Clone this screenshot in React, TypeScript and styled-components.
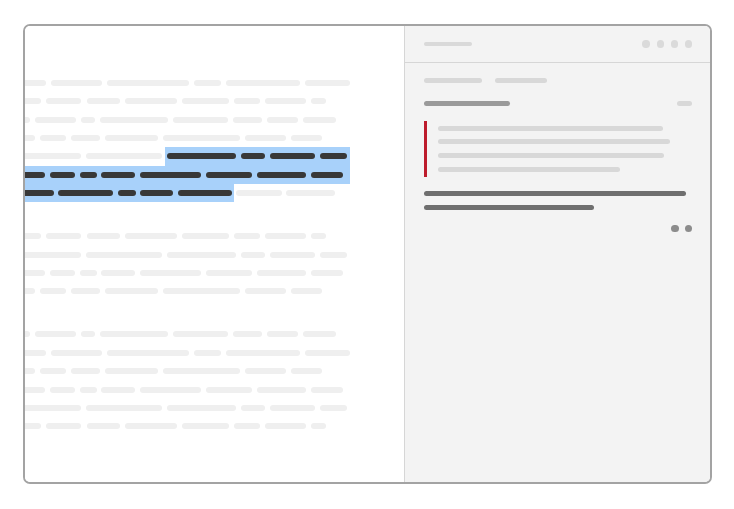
import React from "react";
import styled, { createGlobalStyle } from "styled-components";

const Global = createGlobalStyle`
  html, body { margin: 0; padding: 0; background: #ffffff; }
  body { font-family: "Liberation Sans", Arial, sans-serif; }
`;

const Stage = styled.div`
  padding: 24px 0 0 23px;
`;

const Window = styled.div`
  box-sizing: border-box;
  width: 689px;
  height: 460px;
  border: 2px solid #a3a3a3;
  border-radius: 7px;
  overflow: hidden;
  display: flex;
  background: #ffffff;
`;

const Editor = styled.div`
  width: 379px;
  flex: none;
  overflow: hidden;
  background: #ffffff;
  padding-top: 47.5px;
  box-sizing: border-box;
`;

const Column = styled.div`
  margin-left: -10px;
  display: flex;
  flex-direction: column;
  gap: 24.5px;
`;

const Paragraph = styled.div`
  display: flex;
  flex-direction: column;
`;

const Line = styled.div`
  height: 18.43px;
  display: flex;
  align-items: center;
  white-space: nowrap;
`;

const Word = styled.span<{ $dark?: boolean }>`
  flex: none;
  height: 6px;
  border-radius: 3px;
  background: ${(p) => (p.$dark ? "#383838" : "#efefef")};
`;

const Selection = styled.span`
  flex: none;
  height: 100%;
  display: flex;
  align-items: center;
  background: #a8d1fa;
`;

const Sidebar = styled.div`
  flex: 1;
  background: #f3f3f3;
  border-left: 1px solid #d6d6d6;
  display: flex;
  flex-direction: column;
`;

const Header = styled.div`
  height: 36px;
  border-bottom: 1px solid #d6d6d6;
  display: flex;
  align-items: center;
  justify-content: space-between;
  padding: 0 18px 0 19px;
`;

const Bar = styled.span<{ $w: number; $h?: number; $c?: string }>`
  display: block;
  flex: none;
  width: ${(p) => p.$w}px;
  height: ${(p) => p.$h ?? 5}px;
  border-radius: 3px;
  background: ${(p) => p.$c ?? "#d8d8d8"};
`;

const Dots = styled.div<{ $gap: number }>`
  display: flex;
  gap: ${(p) => p.$gap}px;
`;

const Dot = styled.span<{ $c: string; $d: number }>`
  width: ${(p) => p.$d}px;
  height: ${(p) => p.$d}px;
  border-radius: 50%;
  background: ${(p) => p.$c};
`;

const Body = styled.div`
  padding: 15px 18px 0 19px;
  display: flex;
  flex-direction: column;
`;

const Row = styled.div<{ $mt?: number; $between?: boolean; $gap?: number }>`
  display: flex;
  align-items: center;
  margin-top: ${(p) => p.$mt ?? 0}px;
  justify-content: ${(p) => (p.$between ? "space-between" : "flex-start")};
  gap: ${(p) => p.$gap ?? 0}px;
`;

const Quote = styled.div`
  margin-top: 15.5px;
  border-left: 3px solid #bd1b2c;
  padding: 4.5px 0 5px 11px;
  display: flex;
  flex-direction: column;
  gap: 8.7px;
`;

const Summary = styled.div`
  margin-top: 14.5px;
  display: flex;
  flex-direction: column;
  gap: 8.7px;
`;

const Actions = styled.div`
  margin-top: 15px;
  display: flex;
  justify-content: flex-end;
`;

type Pill = [number, number];
type Sel = { from: number; to: number };

const ORIGIN = 15;

const P1: Pill[] = [[15, 46], [51, 102], [107, 189], [194, 221], [226, 300], [305, 350]];
const P2: Pill[] = [[15, 41], [46, 81], [87, 120], [125, 177], [182, 229], [234, 260], [265, 306], [311, 326]];
const P3: Pill[] = [[15, 30], [35, 76], [81, 95], [100, 168], [173, 228], [233, 262], [267, 298], [303, 336]];
const P4: Pill[] = [[15, 35], [40, 66], [71, 100], [105, 158], [163, 240], [245, 286], [291, 322]];
const P5: Pill[] = [[15, 81], [86, 162], [167, 236], [241, 265], [270, 315], [320, 347]];
const P6: Pill[] = [[15, 45], [50, 75], [80, 97], [101, 135], [140, 201], [206, 252], [257, 306], [311, 343]];
const P7: Pill[] = [[15, 54], [58, 113], [118, 136], [140, 173], [178, 232], [236, 282], [286, 335]];

type LineDef = { pills: Pill[]; sel?: Sel };

const paragraphs: LineDef[][] = [
  [
    { pills: P1 },
    { pills: P2 },
    { pills: P3 },
    { pills: P4 },
    { pills: P5, sel: { from: 165, to: 350 } },
    { pills: P6, sel: { from: 15, to: 350 } },
    { pills: P7, sel: { from: 15, to: 234 } },
  ],
  [{ pills: P2 }, { pills: P5 }, { pills: P6 }, { pills: P4 }],
  [{ pills: P3 }, { pills: P1 }, { pills: P4 }, { pills: P6 }, { pills: P5 }, { pills: P2 }],
];

function renderPills(pills: Pill[], start: number, dark: boolean, keyBase: string) {
  let prev = start;
  return pills.map(([a, b], i) => {
    const el = (
      <Word
        key={keyBase + i}
        $dark={dark}
        style={{ width: b - a, marginLeft: a - prev }}
      />
    );
    prev = b;
    return el;
  });
}

function TextLine({ pills, sel }: LineDef) {
  if (!sel) {
    return <Line>{renderPills(pills, ORIGIN, false, "w")}</Line>;
  }
  const before = pills.filter(([a]) => a < sel.from);
  const inside = pills.filter(([a, b]) => a >= sel.from && b <= sel.to);
  const after = pills.filter(([, b]) => b > sel.to);
  const beforeEnd = before.length ? before[before.length - 1][1] : ORIGIN;
  return (
    <Line>
      {renderPills(before, ORIGIN, false, "b")}
      <Selection style={{ width: sel.to - sel.from, marginLeft: sel.from - beforeEnd }}>
        {renderPills(inside, sel.from, true, "s")}
      </Selection>
      {renderPills(after, sel.to, false, "a")}
    </Line>
  );
}

export default function App() {
  return (
    <>
      <Global />
      <Stage>
        <Window>
          <Editor>
            <Column>
              {paragraphs.map((lines, pi) => (
                <Paragraph key={pi}>
                  {lines.map((l, li) => (
                    <TextLine key={li} {...l} />
                  ))}
                </Paragraph>
              ))}
            </Column>
          </Editor>
          <Sidebar>
            <Header>
              <Bar $w={48} $h={4} $c="#d9d9d9" />
              <Dots $gap={6.8}>
                <Dot $c="#dadada" $d={7.3} />
                <Dot $c="#dadada" $d={7.3} />
                <Dot $c="#dadada" $d={7.3} />
                <Dot $c="#dadada" $d={7.3} />
              </Dots>
            </Header>
            <Body>
              <Row $gap={13}>
                <Bar $w={58} />
                <Bar $w={52} />
              </Row>
              <Row $mt={17.5} $between>
                <Bar $w={86} $c="#9a9a9a" />
                <Bar $w={15} />
              </Row>
              <Quote>
                <Bar $w={225} />
                <Bar $w={232} />
                <Bar $w={226} />
                <Bar $w={182} />
              </Quote>
              <Summary>
                <Bar $w={262} $c="#6f6f6f" />
                <Bar $w={170} $c="#6f6f6f" />
              </Summary>
              <Actions>
                <Dots $gap={6}>
                  <Dot $c="#8c8c8c" $d={7.5} />
                  <Dot $c="#8c8c8c" $d={7.5} />
                </Dots>
              </Actions>
            </Body>
          </Sidebar>
        </Window>
      </Stage>
    </>
  );
}
